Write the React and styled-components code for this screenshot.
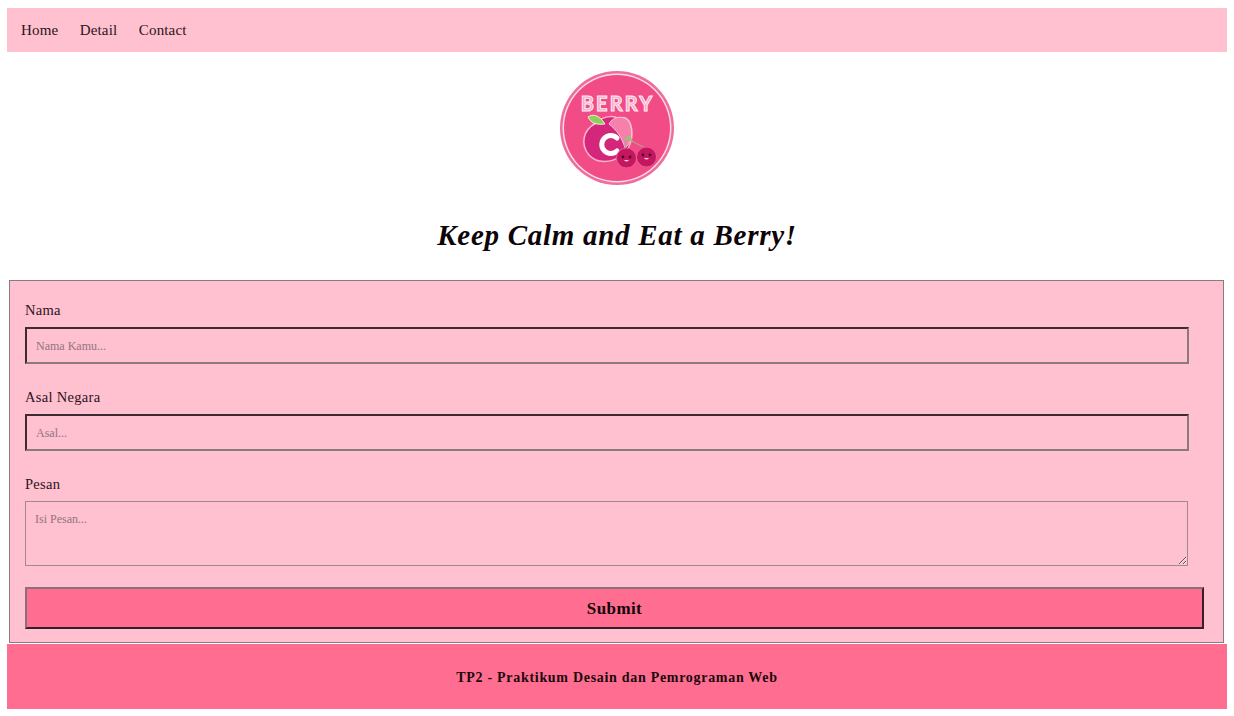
import React from "react";
import styled, { createGlobalStyle } from "styled-components";

const Global = createGlobalStyle`
  html, body { margin: 0; padding: 0; background: #fff; }
  body { font-family: "Liberation Serif", "Noto Serif", serif; color: #111; }
  * { box-sizing: border-box; }
`;
const Page = styled.div`
  width: 1234px; height: 716px; padding: 8px 7px 0; overflow: hidden;
  display: flex; flex-direction: column;
`;
const Nav = styled.nav`
  height: 44px; background: #ffc0cf; display: flex; align-items: center;
  padding: 0 14px; gap: 21.5px; flex: none;
`;
const NavLink = styled.a`
  font-size: 15px; color: #2a1420; letter-spacing: 0.15px; text-decoration: none;
`;
const Hero = styled.header`
  display: flex; flex-direction: column; align-items: center; flex: none;
  padding-top: 18px; height: 228px;
`;
const Logo = styled.svg`
  width: 116px; height: 116px; display: block; flex: none; margin-left: -1px;
`;
const Tagline = styled.h1`
  margin: 31px 0 0; font-size: 29px; line-height: 36px; font-weight: 700; font-style: italic;
  color: #0c0406; letter-spacing: 0.72px; font-family: "Liberation Serif", serif;
`;
const Form = styled.form`
  margin: 0 3px 0 2px; height: 363px; flex: none; background: #ffc0cf;
  border: 1px solid #8b7a80; padding: 20px 15px 0;
  display: flex; flex-direction: column;
`;
const Field = styled.div`
  display: flex; flex-direction: column; height: 87px; flex: none;
`;
const Label = styled.label`
  font-size: 14.5px; line-height: 18px; color: #2a1420; letter-spacing: 0.3px; margin-bottom: 8px;
`;
const TextInput = styled.input`
  width: 1164px; height: 37px; background: #ffc0cf; font: inherit; font-size: 12px;
  border: 2px solid; border-color: #3e2a33 #8a7a80 #8a7a80 #3e2a33; padding: 2px 9px 0; outline: none;
  &::placeholder { color: #8f7580; opacity: 1; }
`;
const TextArea = styled.textarea`
  width: 1163px; height: 65px; background: #ffc0cf; font: inherit; font-size: 12px;
  border: 1px solid #a08a92; padding: 10px 9px; outline: none; display: block;
  &::placeholder { color: #8f7580; opacity: 1; }
`;
const MessageField = styled(Field)`
  height: 112px;
`;
const Submit = styled.button`
  width: 1179px; height: 42px; background: #ff6d90; font-family: inherit; font-size: 17px;
  font-weight: 700; color: #14060a; letter-spacing: 0.4px; flex: none;
  border: 2px solid; border-color: #8a7078 #33202a #33202a #8a7078; padding: 1px 0 0;
`;
const Footer = styled.footer`
  margin-top: 1px; height: 65px; flex: none; background: #ff6d90; padding-top: 2px;
  display: flex; align-items: center; justify-content: center;
`;
const FooterText = styled.p`
  margin: 0; font-size: 14px; font-weight: 700; color: #1b090e; letter-spacing: 0.7px;
`;

function BerryLogo() {
  return (
    <Logo viewBox="0 0 116 116" aria-label="Berry C logo">
      <circle cx="58" cy="58" r="57" fill="#ee6c9e" />
      <circle cx="58" cy="58" r="54.5" fill="#fbdbe7" />
      <circle cx="58" cy="58" r="53" fill="#f24c86" />
      <text x="58.5" y="41" textAnchor="middle" fontFamily="'Lato', sans-serif" fontWeight="700"
        fontSize="20" letterSpacing="2.2" fill="#f7a5c5" stroke="#ffeef4" strokeWidth="1">BERRY</text>
      <path d="M37 53 C46 44 58 46 60 50 C64 45 70 48 72 56 C75 67 71 80 62 86 C52 93 38 94 30 85 C21 74 24 60 37 53 Z"
        fill="#d4277c" stroke="#fbb5d0" strokeWidth="1.5" />
      <path d="M50 54 C54 46 67 44 71 54 C75 66 71 74 66 78 C63 68 58 60 50 54 Z" fill="#f77fab" stroke="#fbc7da" strokeWidth="1" />
      <path d="M29 47 C33 44 40 44 46 54 C39 55 32 54 29 47 Z" fill="#8fcf5a" stroke="#fff" strokeWidth="0.8" />
      <path d="M58 68 A 9 9 0 1 0 58 81" fill="none" stroke="#fff" strokeWidth="5" strokeLinecap="round" />
      <path d="M66 78 L67 68 L86 78" fill="none" stroke="#b99a8e" strokeWidth="1.3" />
      <path d="M64 69 L71 65 L74 72 Z" fill="#a5b97d" />
      <circle cx="67.5" cy="88" r="10" fill="#c4175f" stroke="#e85b95" strokeWidth="1" />
      <circle cx="87.5" cy="87" r="10" fill="#c4175f" stroke="#e85b95" strokeWidth="1" />
      <circle cx="64" cy="87" r="1.4" fill="#4a0a28" />
      <circle cx="71" cy="87" r="1.4" fill="#4a0a28" />
      <circle cx="84" cy="85" r="1.4" fill="#4a0a28" />
      <circle cx="91" cy="85" r="1.4" fill="#4a0a28" />
      <path d="M65 90 Q67.5 93 70 90 Z" fill="#fbd0e0" />
      <path d="M85 88 Q87.5 91 90 88 Z" fill="#fbd0e0" />
    </Logo>
  );
}

export default function App() {
  return (
    <Page>
      <Global />
      <Nav>
        <NavLink href="#">Home</NavLink>
        <NavLink href="#">Detail</NavLink>
        <NavLink href="#">Contact</NavLink>
      </Nav>
      <Hero>
        <BerryLogo />
        <Tagline>Keep Calm and Eat a Berry!</Tagline>
      </Hero>
      <Form onSubmit={(e) => e.preventDefault()}>
        <Field>
          <Label htmlFor="nama">Nama</Label>
          <TextInput id="nama" placeholder="Nama Kamu..." />
        </Field>
        <Field>
          <Label htmlFor="asal">Asal Negara</Label>
          <TextInput id="asal" placeholder="Asal..." />
        </Field>
        <MessageField>
          <Label htmlFor="pesan">Pesan</Label>
          <TextArea id="pesan" placeholder="Isi Pesan..." />
        </MessageField>
        <Submit type="submit">Submit</Submit>
      </Form>
      <Footer>
        <FooterText>TP2 - Praktikum Desain dan Pemrograman Web</FooterText>
      </Footer>
    </Page>
  );
}
